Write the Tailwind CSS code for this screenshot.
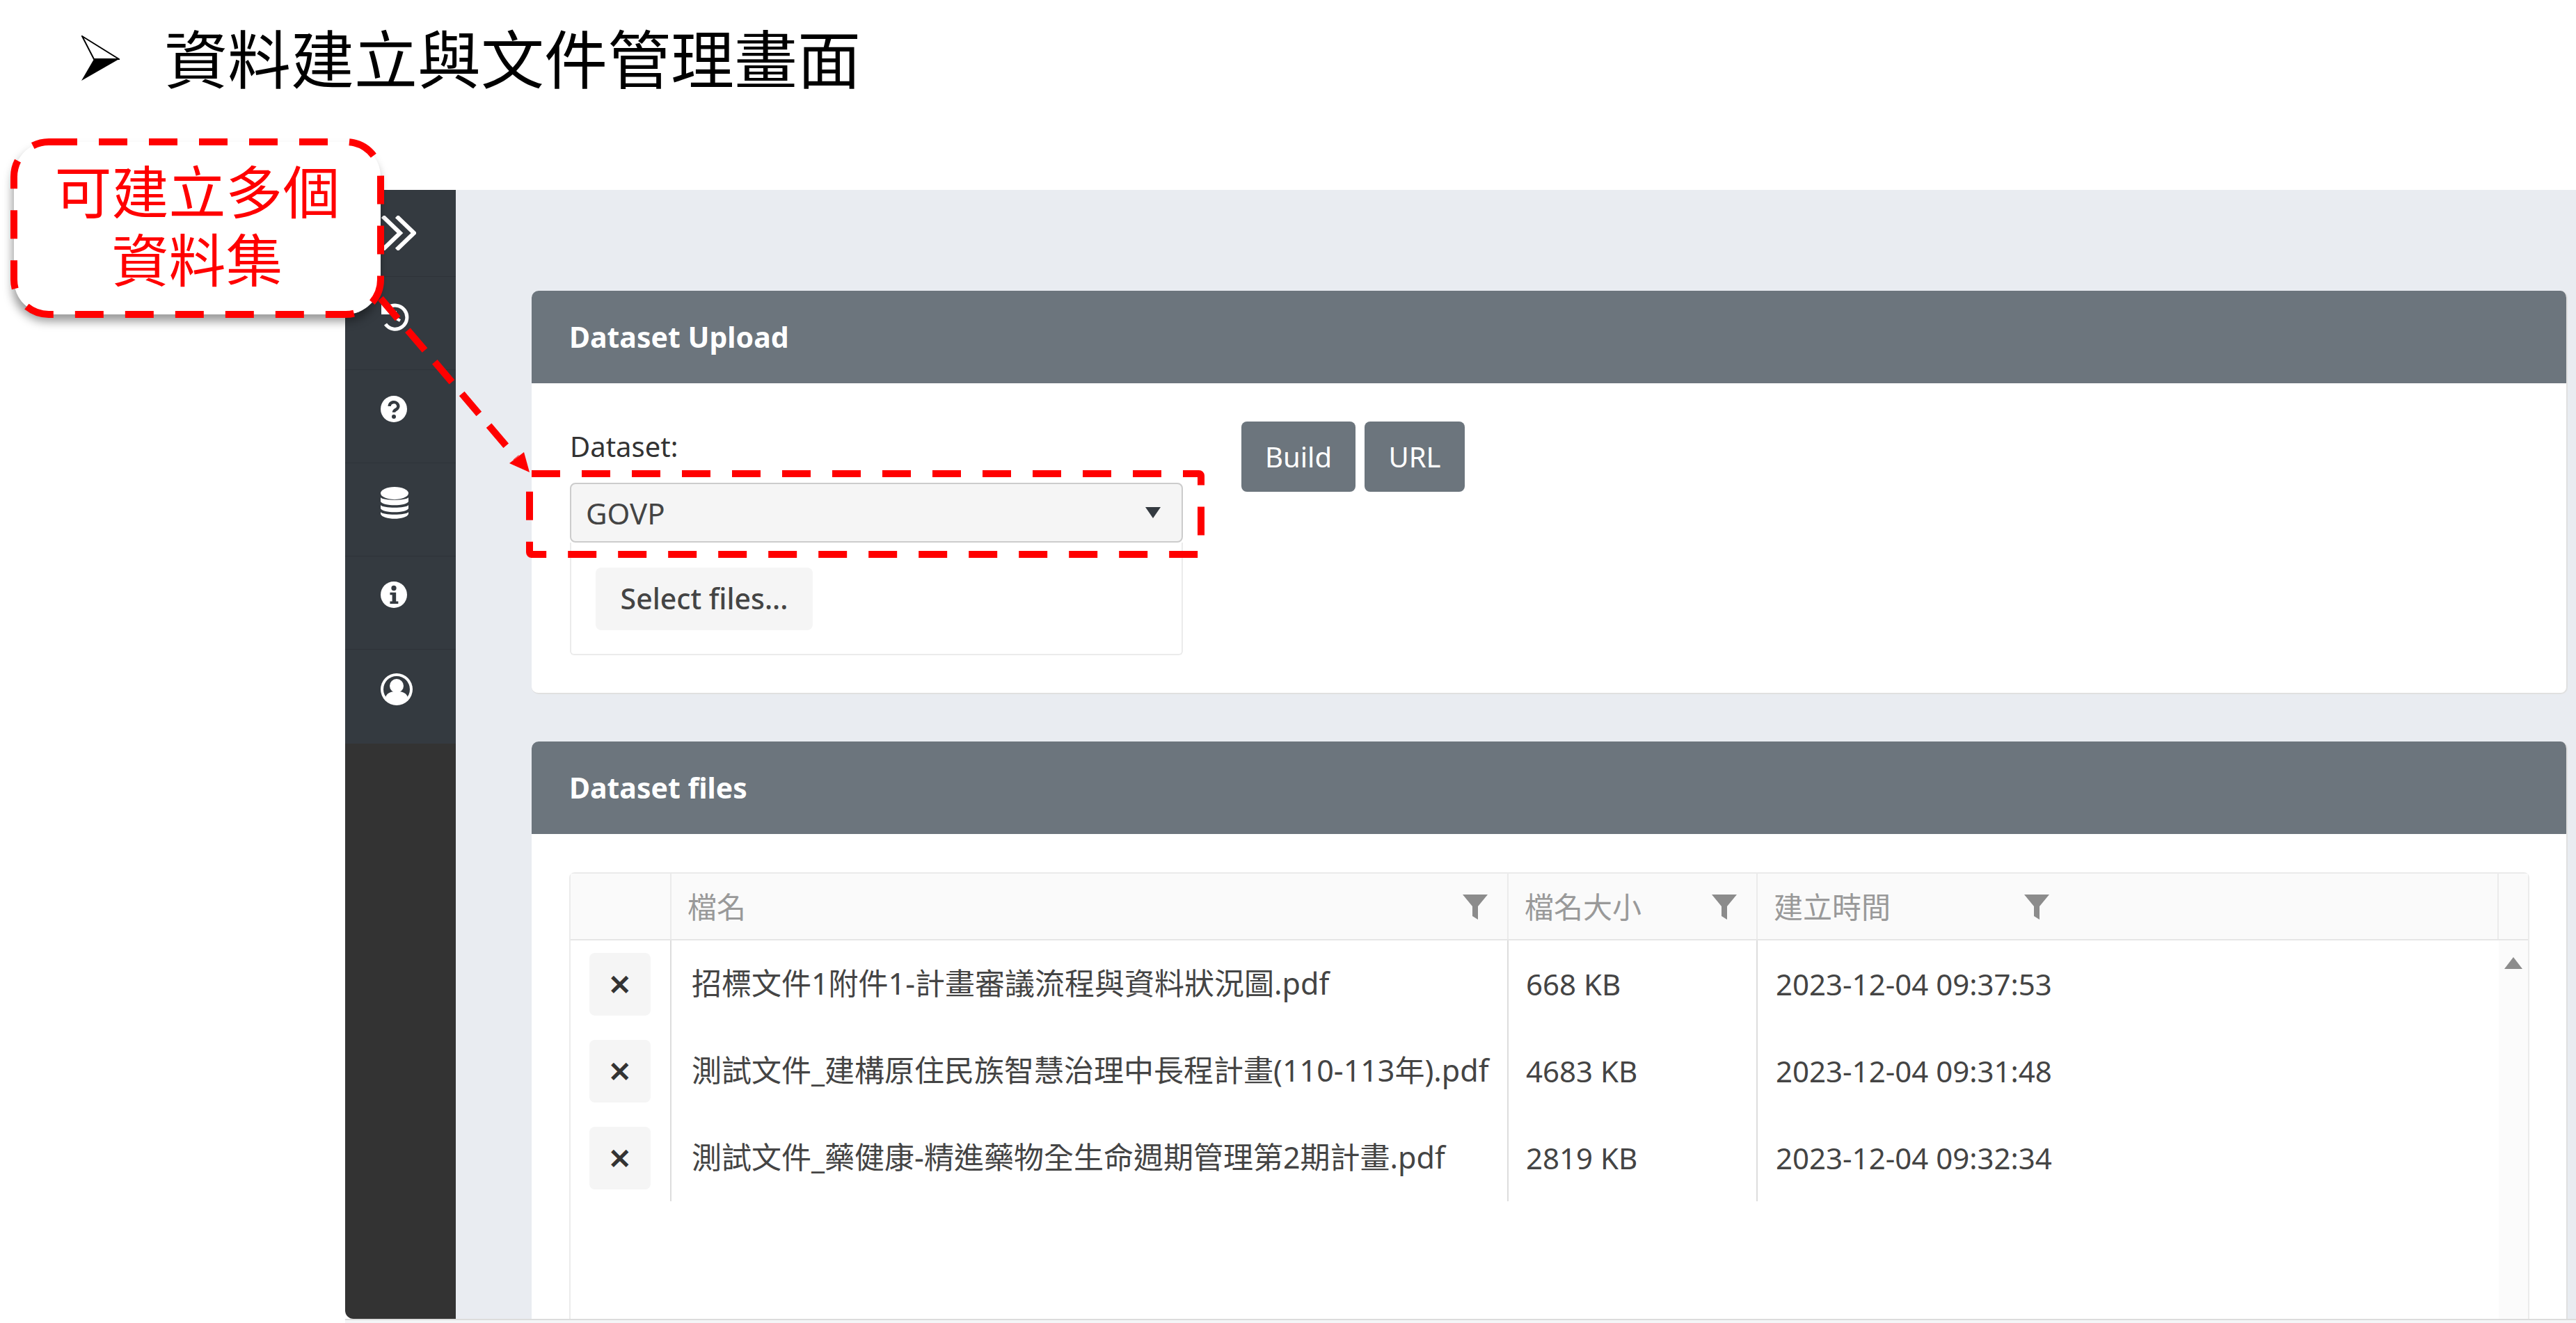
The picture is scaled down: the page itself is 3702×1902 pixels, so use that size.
<!DOCTYPE html>
<html lang="zh-Hant">
<head>
  <meta charset="UTF-8">
  <title>資料建立與文件管理畫面</title>
  <script src="https://cdn.jsdelivr.net/npm/@tailwindcss/browser@4"></script>
</head>
<body class="relative w-[3702px] h-[1902px] overflow-hidden bg-white text-[#444] font-['Noto_Sans','Noto_Sans_CJK_TC',sans-serif]">
  <!-- Slide title -->
  <div class="h-[273px] pl-[117px] pt-[22px] flex items-start gap-[64px] text-black">
    <svg class="w-[55px] h-[66px] mt-[29px]" viewBox="0 0 55 66">
      <path d="M1 1 L54 34 L18 34 Z" fill="#fff" stroke="#000" stroke-width="2"/>
      <path d="M18 34 L54 34 L0 65 Z" fill="#000"/>
    </svg>
    <h1 class="text-[91px] leading-[116px] font-normal font-['Noto_Sans_CJK_TC',sans-serif]">資料建立與文件管理畫面</h1>
  </div>

  <!-- App -->
  <div class="flex ml-[496px] h-[1623px]">
    <aside class="w-[159px] shrink-0 bg-[#333333] rounded-bl-[12px] overflow-hidden">
      <div class="bg-[#343a40] text-white">
        <div class="h-[125px] flex items-center pl-[52px] border-b border-[#2e3339]">
          <svg class="w-[50px] h-[50px]" viewBox="0 0 50 50" fill="none" stroke="#fff" stroke-width="6">
            <path d="M2 1 L27 25 L2 49"/><path d="M22 1 L47 25 L22 49"/>
          </svg>
        </div>
        <div class="h-[134px] flex items-center pl-[52px] pb-[18px] border-b border-[#2e3339]">
          <svg class="w-[40px] h-[40px]" viewBox="0 0 40 40" fill="none" stroke="#fff">
            <path d="M9 7 A17 17 0 1 1 6 30" stroke-width="5"/>
            <path d="M0 1 L0 16 L15 16 Z" fill="#fff" stroke="none"/>
            <path d="M20 11 V21 L27 25" stroke-width="4"/>
          </svg>
        </div>
        <div class="h-[134px] flex items-center pl-[51px] pb-[22px] border-b border-[#2e3339]">
          <svg class="w-[38px] h-[38px]" viewBox="0 0 24 24"><circle cx="12" cy="12" r="12" fill="#fff"/><path d="M8 9.500a4 3.600 0 1 1 6 3c-1.400.8-2 1.300-2 2.500" fill="none" stroke="#343a40" stroke-width="2.800"/><circle cx="12" cy="19" r="1.900" fill="#343a40"/></svg>
        </div>
        <div class="h-[134px] flex items-center pl-[51px] pb-[20px] border-b border-[#2e3339]">
          <svg class="w-[40px] h-[46px]" viewBox="0 0 40 46" fill="#fff"><ellipse cx="20" cy="9" rx="20" ry="9"/><path d="M0 15c3 5 37 5 40 0v6c-3 7-37 7-40 0z"/><path d="M0 26c3 5 37 5 40 0v5c-3 7-37 7-40 0z"/><path d="M0 36c3 5 37 5 40 0v3c-3 9-37 9-40 0z"/></svg>
        </div>
        <div class="h-[134px] flex items-center pl-[51px] pb-[23px] border-b border-[#2e3339]">
          <svg class="w-[38px] h-[38px]" viewBox="0 0 24 24"><circle cx="12" cy="12" r="12" fill="#fff"/><circle cx="12" cy="6" r="2.300" fill="#343a40"/><path d="M8.500 10h5.500v8h2v2.200H8.500V18h2v-5.800h-2z" fill="#343a40"/></svg>
        </div>
        <div class="h-[135px] flex items-center pl-[51px] pb-[21px]">
          <svg class="w-[46px] h-[46px]" viewBox="0 0 46 46"><circle cx="23" cy="23" r="23" fill="#fff"/><circle cx="23" cy="23" r="19" fill="#343a40"/><circle cx="23" cy="18" r="10" fill="#fff"/><path d="M7 34c3-7 9-8 16-8s13 1 16 8c-4 7-10 10-16 10s-12-3-16-10z" fill="#fff"/></svg>
        </div>
      </div>
    </aside>

    <main class="flex-1 min-w-0 bg-[#e9ecf1] pl-[109px] pr-[12px] pt-[145px]">
      <!-- Upload card -->
      <section class="h-[580px] bg-white rounded-[10px] overflow-hidden border-r-2 border-b-2 border-[#e0e0e0]">
        <div class="h-[133px] bg-[#6c757d] pl-[54px] flex items-center text-white text-[41px] font-bold">Dataset Upload</div>
        <div class="flex pl-[55px] pt-[55px]">
          <div class="w-[881px] pt-[11px]">
            <label class="block text-[40px] leading-[50px] text-[#333]">Dataset:</label>
            <div class="mt-[27px] h-[86px] flex items-center justify-between pl-[21px] pr-[30px] bg-[#f5f5f5] border-2 border-[#ccc] rounded-[8px] text-[42px]">
              <span>GOVP</span>
              <span class="w-0 h-0 border-x-[11px] border-x-transparent border-t-[16px] border-t-[#343a40]"></span>
            </div>
            <div class="h-[162px] border-2 border-t-0 border-[#ebebeb] rounded-b-[6px] pl-[35px] pt-[36px]">
              <button class="h-[90px] w-[312px] bg-[#f5f5f5] rounded-[8px] text-[41px] font-medium text-[#444]">Select files...</button>
            </div>
          </div>
          <div class="ml-[84px] flex gap-[13px] h-[101px]">
            <button class="w-[164px] bg-[#6c757d] rounded-[8px] text-white text-[40px]">Build</button>
            <button class="w-[144px] bg-[#6c757d] rounded-[8px] text-white text-[40px]">URL</button>
          </div>
        </div>
      </section>

      <!-- Files card -->
      <section class="mt-[68px] h-[830px] bg-white rounded-t-[10px] overflow-hidden border-r-2 border-[#e0e0e0]">
        <div class="h-[133px] bg-[#6c757d] pl-[54px] flex items-center text-white text-[41px] font-bold">Dataset files</div>
        <div class="pl-[54px] pt-[55px] pr-[53px]">
          <div class="h-[650px] border-2 border-b-0 border-[#ebebeb] rounded-t-[8px] flex flex-col">
            <div class="h-[96px] shrink-0 flex bg-[#fafafa] border-b-2 border-[#e6e6e6] text-[42px] text-[#999]">
              <div class="w-[145px] border-r-2 border-[#ebebeb]"></div>
              <div class="w-[1203px] border-r-2 border-[#ebebeb] pl-[23px] pr-[28px] flex items-center justify-between">
                <span>檔名</span>
                <svg class="w-[36px] h-[36px] mt-[2px]" viewBox="0 0 36 36" fill="#8c8c8c"><path d="M0 0h36L22 17v19l-8-5V17z"/></svg>
              </div>
              <div class="w-[358px] border-r-2 border-[#ebebeb] pl-[23px] pr-[28px] flex items-center justify-between">
                <span>檔名大小</span>
                <svg class="w-[36px] h-[36px] mt-[2px]" viewBox="0 0 36 36" fill="#8c8c8c"><path d="M0 0h36L22 17v19l-8-5V17z"/></svg>
              </div>
              <div class="w-[1065px] border-r-2 border-[#ebebeb] pl-[23px] flex items-center gap-[192px]">
                <span>建立時間</span>
                <svg class="w-[36px] h-[36px] mt-[2px]" viewBox="0 0 36 36" fill="#8c8c8c"><path d="M0 0h36L22 17v19l-8-5V17z"/></svg>
              </div>
              <div class="flex-1"></div>
            </div>
            <div class="flex-1 flex">
              <div class="w-[2771px]">
                <div class="h-[125px] flex items-center text-[42px]">
                  <div class="w-[145px] h-full flex items-center justify-center pr-[2px] border-r-2 border-[#ddd]"><button class="w-[88px] h-[90px] bg-[#f5f5f5] rounded-[8px] text-[40px] font-bold text-[#333]">✕</button></div>
                  <div class="w-[1203px] h-full flex items-center border-r-2 border-[#ddd] pl-[29px] text-[43px] whitespace-nowrap">招標文件1附件1-計畫審議流程與資料狀況圖.pdf</div>
                  <div class="w-[358px] h-full flex items-center border-r-2 border-[#ddd] pl-[25px]">668 KB</div>
                  <div class="pl-[26px]">2023-12-04 09:37:53</div>
                </div>
                <div class="h-[125px] flex items-center text-[42px]">
                  <div class="w-[145px] h-full flex items-center justify-center pr-[2px] border-r-2 border-[#ddd]"><button class="w-[88px] h-[90px] bg-[#f5f5f5] rounded-[8px] text-[40px] font-bold text-[#333]">✕</button></div>
                  <div class="w-[1203px] h-full flex items-center border-r-2 border-[#ddd] pl-[29px] text-[43px] whitespace-nowrap">測試文件_建構原住民族智慧治理中長程計畫(110-113年).pdf</div>
                  <div class="w-[358px] h-full flex items-center border-r-2 border-[#ddd] pl-[25px]">4683 KB</div>
                  <div class="pl-[26px]">2023-12-04 09:31:48</div>
                </div>
                <div class="h-[125px] flex items-center text-[42px]">
                  <div class="w-[145px] h-full flex items-center justify-center pr-[2px] border-r-2 border-[#ddd]"><button class="w-[88px] h-[90px] bg-[#f5f5f5] rounded-[8px] text-[40px] font-bold text-[#333]">✕</button></div>
                  <div class="w-[1203px] h-full flex items-center border-r-2 border-[#ddd] pl-[29px] text-[43px] whitespace-nowrap">測試文件_藥健康-精進藥物全生命週期管理第2期計畫.pdf</div>
                  <div class="w-[358px] h-full flex items-center border-r-2 border-[#ddd] pl-[25px]">2819 KB</div>
                  <div class="pl-[26px]">2023-12-04 09:32:34</div>
                </div>
              </div>
              <div class="flex-1 bg-[#fbfbfb] flex justify-center pt-[24px]">
                <span class="w-0 h-0 border-x-[13px] border-x-transparent border-b-[17px] border-b-[#8c8c8c]"></span>
              </div>
            </div>
          </div>
        </div>
      </section>
    </main>
  </div>
  <div class="ml-[496px] h-[6px] border-t-2 border-[#dcdcdc] bg-[#f4f5f7]"></div>

  <!-- Annotations laid over the screenshot -->
  <svg class="absolute left-0 top-0 w-[3702px] h-[1902px] pointer-events-none" viewBox="0 0 3702 1902" fill="none">
    <rect x="761" y="681" width="965" height="116" rx="3" stroke="#ff0000" stroke-width="10" stroke-dasharray="41 31"/>
    <path d="M547 429 L742 658" stroke="#ff0000" stroke-width="10" stroke-dasharray="38 22"/>
    <path d="M761 679 L753 650 L732 666 Z" fill="#ff0000"/>
  </svg>
  <div class="absolute left-[20px] top-[204px] w-[527px] h-[248px] bg-white rounded-[50px] shadow-[-2px_10px_14px_rgba(0,0,0,0.4)] flex items-center justify-center text-center text-[#ff0000] text-[82px] leading-[98px] font-['Noto_Sans_CJK_TC',sans-serif]">
    <div class="-mt-[14px]">可建立多個<br>資料集</div>
    <svg class="absolute -left-[5px] -top-[5px] w-[537px] h-[258px]" viewBox="0 0 537 258" fill="none">
      <rect x="5" y="5" width="527" height="248" rx="50" stroke="#ff0000" stroke-width="10" stroke-dasharray="41 31"/>
    </svg>
  </div>
</body>
</html>
